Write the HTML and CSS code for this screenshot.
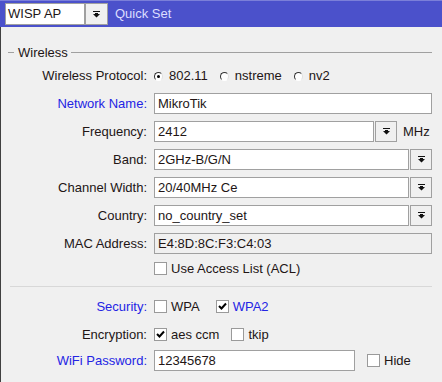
FILE: index.html
```html
<!DOCTYPE html>
<html lang="en">
<head>
    <meta charset="UTF-8">
    <meta name="viewport" content="width=device-width, initial-scale=1.0">
    <title>Quick Set</title>
    <link rel="stylesheet" href="styles.css">
</head>
<body>
    <header class="topbar">
        <div class="mode-select">WISP AP</div>
        <span class="drop-btn">
            <svg width="7" height="7" viewBox="0 0 7 7"><rect x="0" y="0" width="7" height="1"/><polygon points="2,2 5,2 5,3 7,3 3.5,6.5 0,3 2,3"/></svg>
        </span>
        <span class="topbar-title">Quick Set</span>
    </header>

    <main class="panel">
        <div class="group-title"><span>Wireless</span></div>

        <div class="row">
            <label class="label">Wireless Protocol:</label>
            <div class="options options-radio">
                <span class="opt"><span class="radio checked"></span>802.11</span>
                <span class="opt"><span class="radio"></span>nstreme</span>
                <span class="opt"><span class="radio"></span>nv2</span>
            </div>
        </div>

        <div class="row">
            <label class="label blue">Network Name:</label>
            <div class="field full">MikroTik</div>
        </div>

        <div class="row">
            <label class="label">Frequency:</label>
            <div class="field freq">2412</div>
            <span class="drop-btn small">
                <svg width="7" height="7" viewBox="0 0 7 7"><rect x="0" y="0" width="7" height="1"/><polygon points="2,2 5,2 5,3 7,3 3.5,6.5 0,3 2,3"/></svg>
            </span>
            <span class="unit">MHz</span>
        </div>

        <div class="row">
            <label class="label">Band:</label>
            <div class="field combo">2GHz-B/G/N</div>
            <span class="drop-btn small">
                <svg width="7" height="7" viewBox="0 0 7 7"><rect x="0" y="0" width="7" height="1"/><polygon points="2,2 5,2 5,3 7,3 3.5,6.5 0,3 2,3"/></svg>
            </span>
        </div>

        <div class="row">
            <label class="label">Channel Width:</label>
            <div class="field combo">20/40MHz Ce</div>
            <span class="drop-btn small">
                <svg width="7" height="7" viewBox="0 0 7 7"><rect x="0" y="0" width="7" height="1"/><polygon points="2,2 5,2 5,3 7,3 3.5,6.5 0,3 2,3"/></svg>
            </span>
        </div>

        <div class="row">
            <label class="label">Country:</label>
            <div class="field combo">no_country_set</div>
            <span class="drop-btn small">
                <svg width="7" height="7" viewBox="0 0 7 7"><rect x="0" y="0" width="7" height="1"/><polygon points="2,2 5,2 5,3 7,3 3.5,6.5 0,3 2,3"/></svg>
            </span>
        </div>

        <div class="row">
            <label class="label">MAC Address:</label>
            <div class="field full readonly">E4:8D:8C:F3:C4:03</div>
        </div>

        <div class="row row-check">
            <span class="label"></span>
            <span class="opt"><span class="check"></span>Use Access List (ACL)</span>
        </div>

        <div class="separator"></div>

        <div class="row">
            <label class="label blue">Security:</label>
            <div class="options options-sec">
                <span class="opt"><span class="check"></span>WPA</span>
                <span class="opt blue"><span class="check checked">
                    <svg width="11" height="11" viewBox="0 0 11 11"><polyline points="2,5 4.5,7.5 9,2.5" fill="none" stroke="#000" stroke-width="2"/></svg>
                </span>WPA2</span>
            </div>
        </div>

        <div class="row row-enc">
            <label class="label">Encryption:</label>
            <div class="options options-enc">
                <span class="opt"><span class="check checked">
                    <svg width="11" height="11" viewBox="0 0 11 11"><polyline points="2,5 4.5,7.5 9,2.5" fill="none" stroke="#000" stroke-width="2"/></svg>
                </span>aes ccm</span>
                <span class="opt"><span class="check"></span>tkip</span>
            </div>
        </div>

        <div class="row">
            <label class="label blue">WiFi Password:</label>
            <div class="field password">12345678</div>
            <span class="opt hide-opt"><span class="check"></span>Hide</span>
        </div>
    </main>
</body>
</html>
```

FILE: styles.css
```css
body {
    margin: 0;
    padding: 0;
    background: #f0f0f0;
    font-family: "Liberation Sans", Arial, sans-serif;
    font-size: 13px;
    color: #221515;
    width: 442px;
    height: 382px;
    overflow: hidden;
}

/* top bar */
.topbar {
    box-sizing: border-box;
    height: 27px;
    background: #4b51cb;
    border-top: 1px solid #7b7fd9;
    display: flex;
    align-items: flex-start;
    padding: 2px 0 0 5px;
}

.mode-select {
    box-sizing: border-box;
    width: 80px;
    height: 22px;
    background: #fff;
    border: 1px solid #a0a0a0;
    padding: 0 0 0 2px;
    line-height: 20px;
    font-size: 13px;
}

.drop-btn {
    box-sizing: border-box;
    width: 23px;
    height: 22px;
    background: #f0f0f0;
    border: 1px solid #a0a0a0;
    display: flex;
    align-items: center;
    justify-content: center;
}

.drop-btn svg {
    fill: #111;
}

.drop-btn.small {
    width: 22px;
    height: 21px;
    margin-left: 1px;
}

.topbar-title {
    color: #dcdeff;
    line-height: 22px;
    margin-left: 7px;
}

/* panel */
.panel {
    box-sizing: border-box;
    height: 355px;
    border-left: 1px solid #404040;
    padding: 18px 10px 0 0;
}

.group-title {
    display: flex;
    align-items: center;
    height: 15px;
    margin-left: 7px;
    margin-bottom: 5px;
}

.group-title::before,
.group-title::after {
    content: "";
    height: 1px;
    background: #a0a0a0;
}

.group-title::before {
    width: 6px;
}

.group-title::after {
    flex: 1;
}

.group-title span {
    padding: 0 3px 0 4px;
}

.row {
    display: flex;
    align-items: center;
    height: 21px;
    margin-bottom: 7px;
}

.label {
    width: 146px;
    margin-right: 7px;
    text-align: right;
    flex-shrink: 0;
}

.blue {
    color: #2424e4;
}

.field {
    box-sizing: border-box;
    height: 21px;
    background: #fff;
    border: 1px solid #a0a0a0;
    padding-left: 3px;
    line-height: 19px;
}

.field.full {
    width: 278px;
}

.field.freq {
    width: 220px;
}

.field.combo {
    width: 255px;
}

.field.password {
    width: 201px;
}

.field.readonly {
    background: #f0f0f0;
}

.unit {
    margin-left: 6px;
}

.options {
    display: flex;
    align-items: center;
}

.opt {
    display: inline-flex;
    align-items: center;
}

.options-radio .opt {
    margin-right: 12px;
}

.options-sec .opt {
    margin-right: 16px;
}

.options-enc .opt {
    margin-right: 12px;
}

.radio {
    box-sizing: border-box;
    width: 9px;
    height: 9px;
    border-radius: 50%;
    border: 1px solid;
    border-color: #333 #e0e0e0 #fff #333;
    background: #fff;
    margin: 2px 6px 0 0;
    position: relative;
}

.radio.checked::after {
    content: "";
    position: absolute;
    left: 2px;
    top: 2px;
    width: 3px;
    height: 3px;
    border-radius: 50%;
    background: #000;
}

.check {
    box-sizing: border-box;
    width: 13px;
    height: 13px;
    background: #fff;
    border: 1px solid #9a9a9a;
    margin-right: 4px;
    display: inline-flex;
    align-items: center;
    justify-content: center;
}

.row-check {
    height: 14px;
    margin-bottom: 11px;
}

.separator {
    height: 1px;
    background: #d8d8d8;
    margin: 0 0 9px 9px;
}

.row-enc {
    margin-bottom: 5px;
}

.hide-opt {
    margin-left: 12px;
}
```
